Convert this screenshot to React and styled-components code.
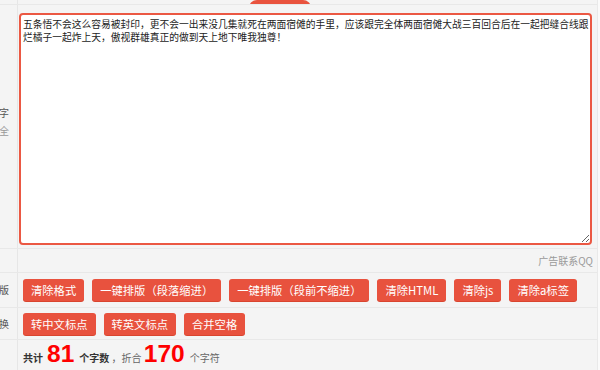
import { useEffect, useRef } from "react";
import styled, { createGlobalStyle } from "styled-components";

const Global = createGlobalStyle`
  html, body {
    margin: 0;
    padding: 0;
    background: #fafafa;
    overflow: hidden;
  }
  body {
    font-family: "Noto Sans CJK SC", "Noto Sans", sans-serif;
    color: #333;
  }
`;

const Table = styled.div`
  width: 669px;
  margin-left: -72px;
  background: #f4f4f4;
  border-right: 1px solid #e9e9e9;
`;

const Row = styled.div`
  display: grid;
  grid-template-columns: 90px 1fr;
  border-bottom: ${(p) => (p.$last ? "none" : "1px solid #e8e8e8")};
  height: ${(p) => p.$h}px;
  overflow: hidden;
`;

const Label = styled.div`
  border-right: 1px solid #e6e6e6;
  display: flex;
  flex-direction: column;
  align-items: flex-end;
  justify-content: center;
  padding: 0 8px ${(p) => p.$pb || 0}px 0;
  font-size: 10px;
  line-height: 18px;
  color: #555;
`;

const SubLabel = styled.span`
  color: #999;
`;

const Cell = styled.div`
  display: flex;
  align-items: ${(p) => p.$align || "center"};
  justify-content: ${(p) => p.$justify || "flex-start"};
  flex-wrap: wrap;
  gap: 8px;
  padding: ${(p) => p.$pt || 0}px 4px 0 ${(p) => p.$pl ?? 5}px;
`;

const TopCell = styled(Cell)`
  align-items: flex-end;
  padding-left: 187px;
  gap: 24px;
`;

const TopLink = styled.span`
  font-size: 10px;
  line-height: 10px;
  color: #6aa5e6;
  margin-bottom: 2px;
`;

const Pill = styled.span`
  display: inline-block;
  width: 62px;
  height: 16px;
  border-radius: 8px;
  background: #e9533e;
  margin-bottom: 1px;
`;

const Area = styled.textarea`
  box-sizing: border-box;
  width: 573px;
  height: 232px;
  margin: 0;
  border: 2px solid #eb5843;
  border-radius: 4px;
  padding: 3px 1px 3px 2px;
  font-family: "Noto Sans CJK SC", sans-serif;
  font-size: 9.75px;
  line-height: 13px;
  color: #222;
  background: #fff;
  outline: none;
  resize: both;
  caret-color: #000;
`;

const Ad = styled.span`
  font-size: 10px;
  color: #9a9a9a;
`;

const Btn = styled.button`
  height: 22px;
  padding: 0 8px;
  border: none;
  border-radius: 3px;
  background: #e8523e;
  color: #fff;
  font-family: "Noto Sans CJK SC", sans-serif;
  font-size: 11.3px;
  line-height: 22px;
  white-space: nowrap;
  box-shadow: 0 1px 0 #d9452f;
  cursor: pointer;
`;

const Stats = styled.div`
  display: flex;
  align-items: baseline;
  font-size: 10px;
  color: #666;
`;

const Bold = styled.span`
  font-weight: bold;
  color: #333;
`;

const Num = styled.span`
  font-family: "Liberation Sans", Arial, sans-serif;
  font-size: 24.5px;
  font-weight: bold;
  color: #f00;
  margin: 0 ${(p) => p.$mr}px 0 ${(p) => p.$ml}px;
`;

const text =
  "五条悟不会这么容易被封印，更不会一出来没几集就死在两面宿傩的手里，应该跟完全体两面宿傩大战三百回合后在一起把缝合线跟烂橘子一起炸上天，傲视群雄真正的做到天上地下唯我独尊！\n";

const row1 = ["清除格式", "一键排版（段落缩进）", "一键排版（段前不缩进）", "清除HTML", "清除js", "清除a标签"];
const row2 = ["转中文标点", "转英文标点", "合并空格"];

export default function App() {
  const ref = useRef(null);

  useEffect(() => {
    const el = ref.current;
    if (el) {
      el.focus();
      el.setSelectionRange(el.value.length, el.value.length);
    }
  }, []);

  return (
    <>
      <Global />
      <Table>
        <Row $h={4}>
          <Label />
          <TopCell>
            <TopLink>说明</TopLink>
            <Pill />
          </TopCell>
        </Row>
        <Row $h={243}>
          <Label $pb={9}>
            <span>输入文字</span>
            <SubLabel>支持全</SubLabel>
          </Label>
          <Cell $pl={1} $pt={8} $align="flex-start">
            <Area ref={ref} defaultValue={text} spellCheck={false} />
          </Cell>
        </Row>
        <Row $h={23}>
          <Label />
          <Cell $justify="flex-end">
            <Ad>广告联系QQ</Ad>
          </Cell>
        </Row>
        <Row $h={34}>
          <Label>一键排版</Label>
          <Cell>
            {row1.map((t) => (
              <Btn key={t}>{t}</Btn>
            ))}
          </Cell>
        </Row>
        <Row $h={31}>
          <Label>符号转换</Label>
          <Cell>
            {row2.map((t) => (
              <Btn key={t}>{t}</Btn>
            ))}
          </Cell>
        </Row>
        <Row $h={40} $last>
          <Label />
          <Cell $align="flex-start">
            <Stats>
              <Bold>共计</Bold>
              <Num $ml={4} $mr={5}>81</Num>
              <Bold>个字数</Bold>
              <span>&nbsp;，折合&nbsp;</span>
              <Num $ml={0} $mr={5}>170</Num>
              <span>个字符</span>
            </Stats>
          </Cell>
        </Row>
      </Table>
    </>
  );
}
